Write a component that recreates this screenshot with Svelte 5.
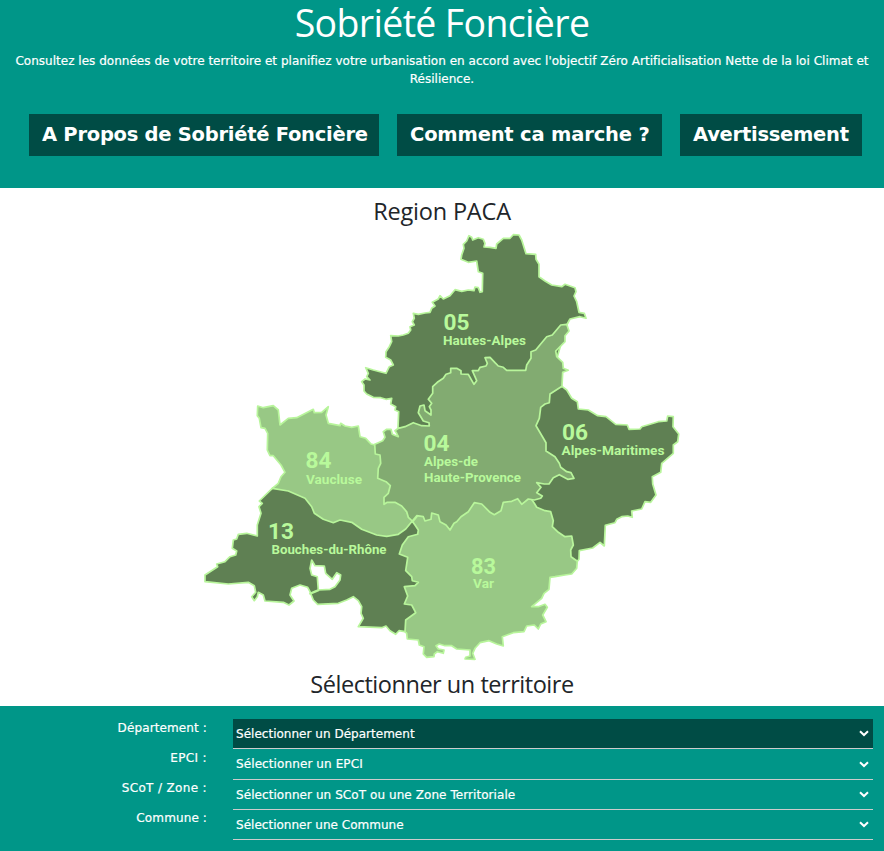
<script>
  const actions = ['A Propos de Sobriété Foncière', 'Comment ca marche ?', 'Avertissement'];

  const fields = [
    { id: 'departement', label: 'Département :', placeholder: 'Sélectionner un Département', active: true },
    { id: 'epci', label: 'EPCI :', placeholder: 'Sélectionner un EPCI' },
    { id: 'scot', label: 'SCoT / Zone :', placeholder: 'Sélectionner un SCoT ou une Zone Territoriale' },
    { id: 'commune', label: 'Commune :', placeholder: 'Sélectionner une Commune' }
  ];

  // Outlines are stored as runs of points at three units per pixel, each run with its own origin.
  const run = (ox, oy, points) =>
    points.split(' ').map((p) => {
      const [x, y] = p.split(',').map(Number);
      return `${(ox + x / 3).toFixed(1)},${(oy + y / 3).toFixed(1)}`;
    }).join(' ');
  const outline = (...runs) => 'M' + runs.map((r) => run(...r)).join(' ') + 'Z';

  // Later regions cover the inner edges of the earlier ones.
  const regions = [
    {
      code: '05', tone: 'dark',
      d: outline([350, 225, '144,607 146,560 135,555 137,545 122,537 125,520 108,523 92,518 70,517 50,507 42,498 42,480 35,470 45,462 60,465 50,455 55,445 47,428 70,435 90,440 108,445 118,425 130,420 122,405 107,397 108,380 118,365 125,350 122,332 145,333 160,330 175,325 182,315 180,305 193,300 187,290 193,280 190,265 205,268 225,264 240,262 245,250 255,243 247,232 265,222 270,212 280,222 300,212 315,194 335,199 355,195 372,197 375,186 385,188 390,202 397,200 398,145 385,140 380,108 355,112 333,103 335,90 342,70 340,58 350,48 357,32 365,37 368,45 385,38 400,43 405,55 402,66 420,67 438,70 440,57 460,40 480,40 490,29 507,30 515,45 528,86 557,88 558,103 567,118 567,155 585,168 605,180 635,185 645,178 675,188 678,200 672,213 680,230 687,262 703,265 708,280 690,275 660,282 652,297 645,315 615,420 540,600 300,618 155,614'])
    },
    {
      code: '06', tone: 'dark',
      d: outline(
        [500, 310, '186,229 200,240 215,265 232,275 235,297 265,300 293,317 318,320 347,343 382,345 387,358 420,357 425,350 475,335 500,333 503,318 520,320 519,350 536,372 533,395 520,405 520,430 485,460 482,487 457,500 458,522 468,555 452,577 435,575 425,597 395,603 397,622 383,618 365,620 350,628 345,638 316,646 313,708 300,697 278,714 238,722 237,748'],
        [300, 500, '832,184 780,200'],
        [500, 310, '90,610 90,480 90,300 130,240']
      )
    },
    {
      code: '13', tone: 'dark',
      d: outline(
        [195, 395, '232,280 193,318 202,325 192,335 198,355 187,390 187,423 155,415 130,418 125,432 115,435 112,460 125,468 122,480 105,485 90,500 65,507 68,515 30,540 30,560 100,567 160,562 178,572 182,592 170,605 178,617 187,605 190,592 205,600 210,618 265,622 282,630 297,618 285,600 290,580 315,570 338,577 345,590 355,615 368,628 430,625 455,615 475,605 490,617 500,635'],
        [300, 500, '183,340 190,355 175,380 245,383 258,378 270,392 287,403 297,392 315,395 340,395 370,330 380,240 350,150 370,100 338,65'],
        [195, 395, '560,400 440,360 340,280 260,270']
      )
    },
    {
      code: '84', tone: 'light',
      d: outline([195, 395, '232,280 250,265 258,245 270,232 258,210 235,182 225,182 217,165 218,115 210,100 198,98 193,70 187,62 188,33 205,38 235,32 250,45 255,90 280,70 305,68 355,43 358,53 380,52 400,35 393,60 400,85 435,92 437,85 450,93 470,97 490,93 495,125 512,130 528,147 540,150 570,180 570,240 600,265 590,315 620,325 652,378 632,402 610,418 575,424 545,420 500,403 470,382 435,375 415,383 385,373 358,355 350,335 330,310 280,288'])
    },
    {
      code: '83', tone: 'light',
      d: outline([300, 500, '703,10 710,22 735,32 752,35 760,62 757,80 775,97 795,110 815,108 820,135 812,150 813,170 832,184 830,205 815,222 795,225 765,230 750,232 747,268 732,280 725,295 695,320 715,320 735,313 742,322 728,345 738,365 722,372 715,387 703,375 680,378 672,395 640,398 607,410 610,438 590,432 567,422 540,428 525,445 518,460 525,478 495,477 497,472 510,468 510,450 470,447 455,437 435,437 418,432 408,437 415,447 432,450 430,460 412,455 403,462 402,470 380,472 370,462 372,440 358,435 355,420 322,417 320,400 315,395 317,360 347,338 335,315 313,312 323,288 313,260 345,257 355,247 337,242 335,230 317,212 323,172 298,162 307,135 325,110 353,103 355,90 345,75 338,65 375,20 435,-15 675,-30'])
    },
    {
      code: '04', tone: 'mid',
      d: outline(
        [350, 225, '632,300 650,298 657,318 645,332 645,350 617,378 620,395 638,412 640,430 655,436 638,442 636,482'],
        [500, 310, '186,229 150,252 148,278 135,282 122,292 118,325 108,347 138,398 138,423 165,440 178,460 182,472 200,485 213,488 222,505 203,508 178,494 160,503 147,522 133,522 110,518 123,532 110,548 127,558 122,565 103,570'],
        [360, 340, '523,480 505,477 485,493 473,476 455,484 430,487 423,512 403,524 390,517 365,492 343,488 325,515 303,530 290,545 282,550 270,570 258,555 240,545 235,525 215,519 213,538 195,543 190,530 170,527 157,543 145,532 140,515 125,498 105,487 82,487 72,493 72,472 85,460 91,437 78,425 53,415 55,385 62,370 60,345 46,342 44,313 55,308 68,302 75,292 70,275 80,268 93,268 97,283 115,290 110,280 105,272 115,265 135,260 160,248 185,257 208,258 207,248 190,243 175,218 180,198 192,195 195,212 213,225 213,210 208,200 215,190 205,178 218,160 218,140 232,127 250,115 258,103 272,98 272,85 290,85 303,92 303,102 325,103 342,133 350,122 337,92 355,92 360,82 378,78 382,70 375,53 390,52 405,68 415,78 430,82 440,91 497,91 500,75 513,55 513,35 527,30'],
        [350, 225, '590,335 607,330']
      )
    }
  ];

  const lagoon = outline([195, 395, '350,495 360,512 388,513 392,535 412,553 425,533 437,540 435,555 420,575 405,583 370,585 367,545 350,540 345,520']);
  const canal = 'M' + run(195, 395, '343,597 360,590 372,585');

  const captions = [
    { code: '05', x: 443.5, y: 330, w: 26, lines: [['Hautes-Alpes', 443, 345.3, 83]] },
    { code: '04', x: 423.5, y: 450.7, w: 26, lines: [['Alpes-de', 424, 466, 54], ['Haute-Provence', 424, 482, 97]] },
    { code: '06', x: 562, y: 440, w: 26, lines: [['Alpes-Maritimes', 561.5, 455, 103]] },
    { code: '84', x: 305.5, y: 468, w: 26, lines: [['Vaucluse', 306, 484, 56]] },
    { code: '13', x: 268, y: 539, w: 26, lines: [['Bouches-du-Rhône', 271.5, 554, 115]] },
    { code: '83', x: 471, y: 573.5, w: 25, lines: [['Var', 473, 588, 21]] }
  ];
</script>

<header>
  <h1>Sobriété Foncière</h1>
  <p>Consultez les données de votre territoire et planifiez votre urbanisation en accord avec l'objectif Zéro Artificialisation Nette de la loi Climat et Résilience.</p>
  <nav>
    {#each actions as action}
      <button type="button">{action}</button>
    {/each}
  </nav>
</header>

<main>
  <h2 class="region-title">Region PACA</h2>
  <svg class="map" viewBox="202 231 480 432" role="img" aria-label="Region PACA">
    {#each regions as region (region.code)}
      <path class="region {region.tone}" d={region.d} />
    {/each}
    <path class="region water" d={lagoon} />
    <path class="canal" d={canal} />
    {#each captions as c (c.code)}
      <text class="code" x={c.x} y={c.y} textLength={c.w} lengthAdjust="spacingAndGlyphs">{c.code}</text>
      {#each c.lines as [name, x, y, w]}
        <text class="name" {x} {y} textLength={w} lengthAdjust="spacingAndGlyphs">{name}</text>
      {/each}
    {/each}
  </svg>
  <h2 class="pick-title">Sélectionner un territoire</h2>
</main>

<form>
  <div class="labels">
    {#each fields as field (field.id)}
      <label for={field.id}>{field.label}</label>
    {/each}
  </div>
  <div class="controls">
    {#each fields as field (field.id)}
      <button type="button" id={field.id} class="select" class:active={field.active}>
        <span>{field.placeholder}</span>
        <svg class="chevron" viewBox="0 0 10 7"><path d="M1 1.2 5 5 9 1.2" /></svg>
      </button>
    {/each}
  </div>
</form>

<style>
  :global(body) {
    background: #fff;
    overflow: hidden;
  }
  :global(#app) {
    width: 884px;
    height: 851px;
    display: flex;
    flex-direction: column;
    font-family: Verdana, 'DejaVu Sans', sans-serif;
    font-size: 12px;
  }
  header {
    box-sizing: border-box;
    height: 188px;
    background: #009688;
    color: #fff;
    text-align: center;
  }
  h1, h2 {
    margin: 0;
    font-family: 'Segoe UI', 'Open Sans', sans-serif;
    font-weight: 400;
    text-align: center;
  }
  h1 {
    height: 52px;
    font-size: 37.5px;
    line-height: 46px;
    letter-spacing: -0.66px;
  }
  p {
    margin: 0;
    padding: 0 12px;
    height: 62px;
    line-height: 18px;
    letter-spacing: 0.02px;
    -webkit-text-stroke: 0.2px #fff;
  }
  nav {
    display: flex;
    gap: 18px;
    padding-left: 29px;
  }
  nav button {
    height: 42px;
    padding: 0 0 2px 13px;
    border: 0;
    background: #004c45;
    color: #fff;
    font: bold 19.5px Verdana, 'DejaVu Sans', sans-serif;
    letter-spacing: -0.26px;
    text-align: left;
    white-space: nowrap;
  }
  nav button:nth-child(1) { width: 350px; }
  nav button:nth-child(2) { width: 265px; letter-spacing: -0.18px; }
  nav button:nth-child(3) { width: 182px; }
  main {
    height: 518px;
    display: flex;
    flex-direction: column;
    align-items: center;
  }
  h2 {
    color: #212529;
    font-size: 23.5px;
    white-space: nowrap;
  }
  .region-title {
    height: 43px;
    line-height: 46px;
    letter-spacing: -0.18px;
  }
  .map {
    width: 480px;
    height: 432px;
    flex: none;
  }
  .pick-title {
    height: 43px;
    line-height: 42px;
    letter-spacing: -0.47px;
  }
  .region {
    stroke: #b8f59b;
    stroke-width: 1.7;
    stroke-linejoin: round;
  }
  .dark { fill: #5f8053; }
  .mid { fill: #82ab71; }
  .light { fill: #98c885; }
  .water { fill: #fff; }
  .canal {
    fill: none;
    stroke: #b8f59b;
    stroke-width: 2.4;
  }
  .code, .name {
    fill: #b8f99b;
    font-family: Roboto, sans-serif;
    font-weight: 700;
  }
  .code { font-size: 22px; }
  .name { font-size: 12.5px; }
  form {
    flex: 1;
    display: flex;
    gap: 26px;
    padding: 13px 11px 0 0;
    background: #009688;
    color: #fff;
    -webkit-text-stroke: 0.2px #fff;
  }
  .labels {
    width: 207px;
    display: flex;
    flex-direction: column;
    align-items: flex-end;
  }
  label {
    height: 30px;
    line-height: 18px;
    letter-spacing: 0.12px;
  }
  label:nth-child(2), label:nth-child(3) { letter-spacing: 0.35px; }
  .controls {
    flex: 1;
    display: flex;
    flex-direction: column;
  }
  .select {
    box-sizing: border-box;
    height: 30px;
    display: flex;
    align-items: center;
    justify-content: space-between;
    padding: 0 4px 0 3px;
    border: 0;
    border-bottom: 1px solid #ccc;
    background: transparent;
    color: #fff;
    font: inherit;
    letter-spacing: 0.02px;
  }
  .select:nth-child(2) { height: 31px; letter-spacing: 0.1px; }
  .select:nth-child(3) { letter-spacing: 0.07px; }
  .active { background: #004c45; }
  .chevron {
    width: 10px;
    height: 7px;
  }
  .chevron path {
    fill: none;
    stroke: #fff;
    stroke-width: 2;
  }
</style>
